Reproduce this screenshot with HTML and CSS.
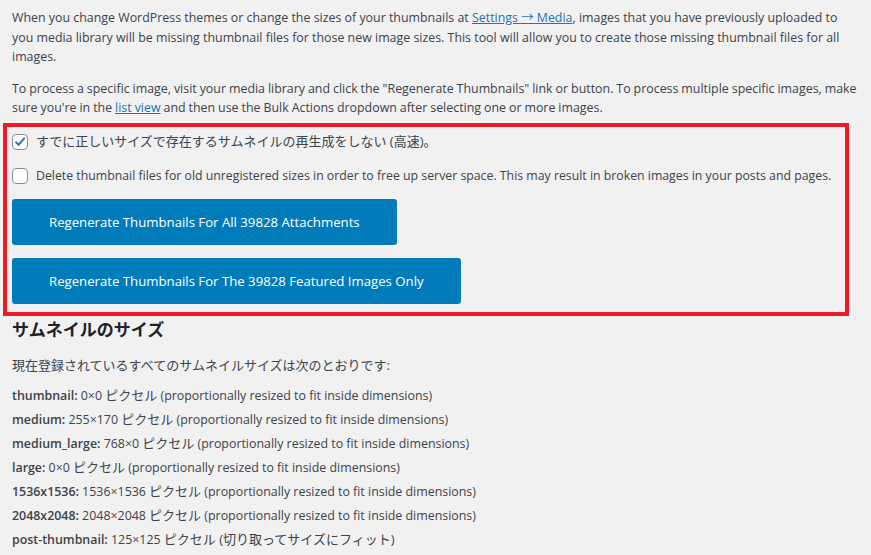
FILE: index.html
```html
<!DOCTYPE html>
<html lang="ja">
<head>
    <meta charset="UTF-8">
    <meta name="viewport" content="width=device-width, initial-scale=1.0">
    <title>Regenerate Thumbnails</title>
    <link rel="stylesheet" href="styles.css">
</head>
<body>
    <div class="wrap">
        <p>When you change WordPress themes or change the sizes of your thumbnails at <a href="#">Settings &rarr; Media</a>, images that you have previously uploaded to you media library will be missing thumbnail files for those new image sizes. This tool will allow you to create those missing thumbnail files for all images.</p>
        <p class="intro-last">To process a specific image, visit your media library and click the "Regenerate Thumbnails" link or button. To process multiple specific images, make sure you're in the <a href="#">list view</a> and then use the Bulk Actions dropdown after selecting one or more images.</p>

        <div class="highlight">
            <label class="option">
                <span class="box checked">
                    <svg viewBox="0 0 16 16" width="16" height="16"><path d="M3.4 8.2l3 3 6.4-7.4" fill="none" stroke="#2271b1" stroke-width="2.2" stroke-linecap="round" stroke-linejoin="round"/></svg>
                </span>
                <span class="ja">すでに正しいサイズで存在するサムネイルの再生成をしない (高速)。</span>
            </label>
            <label class="option">
                <span class="box"></span>
                <span>Delete thumbnail files for old unregistered sizes in order to free up server space. This may result in broken images in your posts and pages.</span>
            </label>
            <button class="button-hero">Regenerate Thumbnails For All 39828 Attachments</button>
            <button class="button-hero">Regenerate Thumbnails For The 39828 Featured Images Only</button>
        </div>

        <h2>サムネイルのサイズ</h2>
        <p class="ja lead">現在登録されているすべてのサムネイルサイズは次のとおりです:</p>
        <ul class="sizes">
            <li><strong>thumbnail:</strong> 0&times;0 <span class="ja">ピクセル</span> (proportionally resized to fit inside dimensions)</li>
            <li><strong>medium:</strong> 255&times;170 <span class="ja">ピクセル</span> (proportionally resized to fit inside dimensions)</li>
            <li><strong>medium_large:</strong> 768&times;0 <span class="ja">ピクセル</span> (proportionally resized to fit inside dimensions)</li>
            <li><strong>large:</strong> 0&times;0 <span class="ja">ピクセル</span> (proportionally resized to fit inside dimensions)</li>
            <li><strong>1536x1536:</strong> 1536&times;1536 <span class="ja">ピクセル</span> (proportionally resized to fit inside dimensions)</li>
            <li><strong>2048x2048:</strong> 2048&times;2048 <span class="ja">ピクセル</span> (proportionally resized to fit inside dimensions)</li>
            <li><strong>post-thumbnail:</strong> 125&times;125 <span class="ja">ピクセル (切り取ってサイズにフィット)</span></li>
        </ul>
    </div>
</body>
</html>
```

FILE: styles.css
```css
body {
    margin: 0;
    background-color: #f1f1f1;
    color: #3c434a;
    font-family: "Open Sans", "Noto Sans CJK JP", sans-serif;
    font-size: 12.4px;
    line-height: 19.5px;
}

.wrap {
    padding: 8px 12px 0;
}

p {
    margin: 0 0 12px;
}

p.intro-last {
    margin-bottom: 5px;
    word-spacing: -0.25px;
}

a {
    color: #2271b1;
}

.ja {
    font-size: 13px;
}

.highlight {
    margin: 0 0 0 -9px;
    width: 846px;
    box-sizing: border-box;
    border: 4px solid #ed1c24;
    padding: 5px 5px 8px;
}

.option {
    display: flex;
    align-items: center;
    gap: 8px;
    height: 20px;
    margin-bottom: 14px;
    font-size: 12.3px;
}

.option + .option {
    margin-bottom: 13px;
}

.box {
    width: 16px;
    height: 16px;
    box-sizing: border-box;
    border: 1px solid #8c8f94;
    border-radius: 4px;
    background-color: #fff;
    flex-shrink: 0;
    display: flex;
    align-items: center;
    justify-content: center;
}

.box svg {
    display: block;
}

.button-hero {
    display: block;
    height: 46px;
    padding: 0 37px;
    border: none;
    border-radius: 3px;
    background-color: #007cba;
    color: #fff;
    font-family: "Open Sans", sans-serif;
    font-size: 13.2px;
    cursor: pointer;
    margin-bottom: 13px;
}

.button-hero:last-child {
    margin-bottom: 0;
}

h2 {
    font-size: 17px;
    font-weight: 700;
    color: #1d2327;
    margin: 2px 0 14px;
    line-height: 24px;
}

p.lead {
    margin-bottom: 8px;
}

.sizes {
    list-style: none;
    margin: 0;
    padding: 0;
}

.sizes li {
    height: 24px;
    line-height: 24px;
    white-space: nowrap;
}

.sizes strong {
    font-weight: 600;
}
```
